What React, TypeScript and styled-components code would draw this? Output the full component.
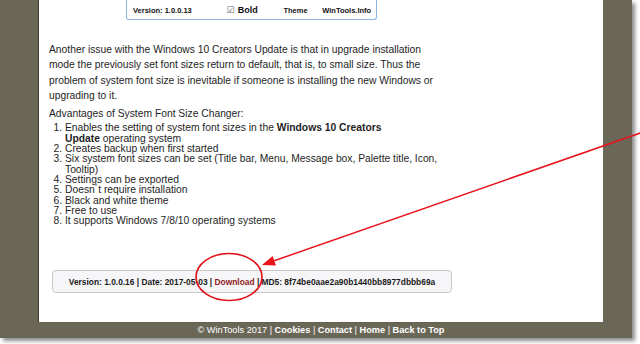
import React from 'react';
import styled, { createGlobalStyle } from 'styled-components';

const GlobalStyle = createGlobalStyle`
  html, body {
    margin: 0;
    padding: 0;
    background: #ffffff;
  }
  body {
    font-family: "Liberation Sans", Arial, sans-serif;
    color: #1e1e1e;
  }
`;

const Stage = styled.div`
  position: relative;
  width: 640px;
  height: 344px;
  overflow: hidden;
`;

const Frame = styled.div`
  width: 632px;
  height: 338px;
  box-sizing: border-box;
  padding: 0 29px 0 39px;
  background: #6a6757;
  box-shadow: 3px 3px 4px rgba(0, 0, 0, 0.45);
  display: flex;
  flex-direction: column;
`;

const Content = styled.div`
  height: 322px;
  box-sizing: border-box;
  padding: 0 10px;
  background: #ffffff;
  box-shadow: -1px 0 1px rgba(0, 0, 0, 0.35);
`;

const AppStrip = styled.div`
  margin-left: 77px;
  width: 251px;
  height: 20px;
  box-sizing: border-box;
  border: 1px solid #8fb6e2;
  border-top: none;
  border-radius: 0 0 3px 3px;
  display: flex;
  align-items: center;
  padding: 1px 0 0 6px;
  font-size: 7.5px;
  font-weight: bold;
  color: #111;
`;

const StripItem = styled.span<{ $w: number }>`
  width: ${p => p.$w}px;
  white-space: nowrap;
  display: flex;
  align-items: center;
`;

const Check = styled.span`
  font-family: "DejaVu Sans", sans-serif;
  font-weight: normal;
  color: #666;
  font-size: 9px;
  margin-right: 3px;
`;

const BoldLabel = styled.span`
  font-size: 9px;
`;

const Para = styled.p<{ $top: number }>`
  margin: ${p => p.$top}px 0 0;
  width: 395px;
  font-size: 10.3px;
  line-height: 15.3px;
`;

const List = styled.ol`
  margin: 2px 0 0;
  padding-left: 16px;
  width: 376px;
  font-size: 10.3px;
  line-height: 10.3px;
`;

const VersionBox = styled.div`
  margin: 44px 0 0 3px;
  width: 400px;
  height: 23px;
  box-sizing: border-box;
  border: 1px solid #c8c8c8;
  border-radius: 4px;
  background: #f6f6f8;
  display: flex;
  align-items: center;
  justify-content: center;
  font-size: 8.4px;
  font-weight: bold;
  color: #1a1a1a;
  white-space: nowrap;
`;

const DownloadLink = styled.span`
  color: #8e1b1b;
`;

const Footer = styled.div`
  height: 16px;
  display: flex;
  align-items: center;
  justify-content: center;
  color: #ffffff;
  font-size: 9.2px;
  white-space: pre;
`;

const FooterLink = styled.b`
  font-weight: bold;
`;

const Overlay = styled.svg`
  position: absolute;
  left: 0;
  top: 0;
  pointer-events: none;
`;

const items: React.ReactNode[] = [
  <>Enables the setting of system font sizes in the <b>Windows 10 Creators</b><br /><b>Update</b> operating system</>,
  'Creates backup when first started',
  'Six system font sizes can be set (Title bar, Menu, Message box, Palette title, Icon, Tooltip)',
  'Settings can be exported',
  'Doesn´t require installation',
  'Black and white theme',
  'Free to use',
  'It supports Windows 7/8/10 operating systems',
];

export default function App() {
  return (
    <>
      <GlobalStyle />
      <Stage>
        <Frame>
          <Content>
            <AppStrip>
              <StripItem $w={94}>Version: 1.0.0.13</StripItem>
              <StripItem $w={57}><Check>☑</Check><BoldLabel>Bold</BoldLabel></StripItem>
              <StripItem $w={39}>Theme</StripItem>
              <StripItem $w={54}>WinTools.Info</StripItem>
            </AppStrip>
            <Para $top={22}>
              Another issue with the Windows 10 Creators Update is that in upgrade installation mode the
              previously set font sizes return to default, that is, to small size. Thus the problem of
              system font size is inevitable if someone is installing the new Windows or upgrading to it.
            </Para>
            <Para $top={3}>Advantages of System Font Size Changer:</Para>
            <List>
              {items.map((it, i) => (
                <li key={i}>{it}</li>
              ))}
            </List>
            <VersionBox>
              Version: 1.0.0.16 | Date: 2017-05-03 |&nbsp;<DownloadLink>Download</DownloadLink>&nbsp;| MD5: 8f74be0aae2a90b1440bb8977dbbb69a
            </VersionBox>
          </Content>
          <Footer>
            © WinTools 2017 | <FooterLink>Cookies</FooterLink> | <FooterLink>Contact</FooterLink> | <FooterLink>Home</FooterLink> | <FooterLink>Back to Top</FooterLink>
          </Footer>
        </Frame>
        <Overlay width="640" height="344" viewBox="0 0 640 344">
          <line x1="646" y1="131" x2="274.3" y2="260.7" stroke="#e8141c" strokeWidth="1.5" />
          <polygon points="262,265 276,265.4 272.6,256" fill="#e8141c" />
          <ellipse cx="229" cy="277" rx="33" ry="23.5" fill="none" stroke="#e0141c" strokeWidth="1.7" />
        </Overlay>
      </Stage>
    </>
  );
}
